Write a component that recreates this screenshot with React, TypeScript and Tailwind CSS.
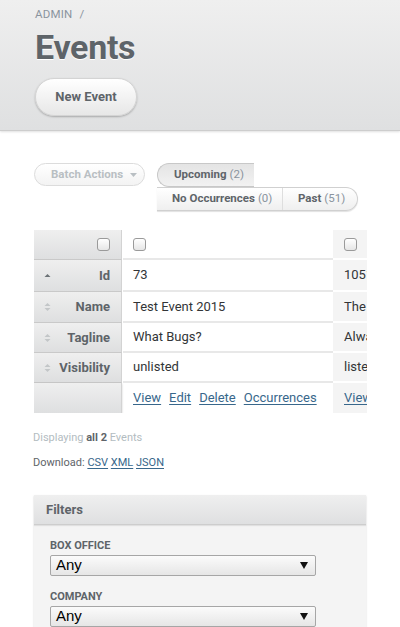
import React from "react";

const Checkbox = () => (
  <span className="inline-block w-[13px] h-[13px] rounded-[3px] border border-[#9a9a9a] bg-gradient-to-b from-[#ffffff] to-[#e6e6e6]" />
);

const SortIcon = ({ active }: { active?: boolean }) =>
  active ? (
    <svg width="7" height="8" viewBox="0 0 7 8" className="shrink-0">
      <path d="M0.5 5 L3.5 2 L6.5 5 Z" fill="#6c7276" />
    </svg>
  ) : (
    <svg width="7" height="10" viewBox="0 0 7 10" className="shrink-0">
      <path d="M0.5 4 L3.5 1 L6.5 4 Z" fill="#c3c6c8" />
      <path d="M0.5 6 L3.5 9 L6.5 6 Z" fill="#c3c6c8" />
    </svg>
  );

type Row = { label: string; sort?: "active" | "none"; h: string; a: React.ReactNode; b: React.ReactNode };

export default function App() {
  const link = "text-[#38678b] underline underline-offset-2";
  const rows: Row[] = [
    { label: "", h: "h-[30px]", a: <Checkbox />, b: <Checkbox /> },
    { label: "Id", sort: "active", h: "h-[32px]", a: "73", b: "1051" },
    { label: "Name", sort: "none", h: "h-[31px]", a: "Test Event 2015", b: "The Event" },
    { label: "Tagline", sort: "none", h: "h-[30px]", a: "What Bugs?", b: "Always" },
    { label: "Visibility", sort: "none", h: "h-[30px]", a: "unlisted", b: "listed" },
    {
      label: "",
      h: "h-[30px]",
      a: (
        <span className="flex gap-[8px]">
          <span className={link}>View</span>
          <span className={link}>Edit</span>
          <span className={link}>Delete</span>
          <span className={link}>Occurrences</span>
        </span>
      ),
      b: <span className={link}>View</span>,
    },
  ];

  return (
    <div className="w-[400px] min-h-[627px] bg-white font-['Roboto',sans-serif] text-[#323537] overflow-hidden">
      {/* Title bar */}
      <div className="h-[131px] bg-gradient-to-b from-[#efefef] to-[#dfe0e1] border-b border-[#cdcdcd] shadow-[0_1px_2px_rgba(0,0,0,0.12)] pl-[35px] pt-[7px]">
        <div className="text-[11.5px] text-[#8a949e] tracking-[0.2px] leading-[14px]">
          ADMIN <span className="ml-[4px]">/</span>
        </div>
        <h2 className="mt-[9px] text-[34px] font-bold text-[#5e6469] leading-[34px] tracking-[-0.3px] [text-shadow:0_1px_0_#fff]">
          Events
        </h2>
        <div className="mt-[14px] w-[102px] h-[38px] rounded-full bg-gradient-to-b from-[#ffffff] to-[#e7e7e7] border border-[#d4d4d4] shadow-[0_1px_2px_rgba(0,0,0,0.25)] flex items-center justify-center text-[13px] font-bold text-[#5e6469]">
          New Event
        </div>
      </div>

      {/* Table tools */}
      <div className="mt-[32px] pl-[34px] flex items-start">
        <div className="w-[111px] h-[23px] rounded-full border border-[#dcdcdc] bg-gradient-to-b from-[#ffffff] to-[#f3f3f3] flex items-center pl-[16px] text-[11.5px] font-bold text-[#b9bfc3]">
          Batch Actions
          <svg width="7" height="4" viewBox="0 0 7 4" className="ml-[7px]">
            <path d="M0 0 L7 0 L3.5 4 Z" fill="#b9bfc3" />
          </svg>
        </div>
        <div className="ml-[12px] flex flex-col">
          <div className="w-[97px] h-[24px] rounded-l-full border border-r-0 border-[#c8c8c8] bg-gradient-to-b from-[#e4e4e4] to-[#f2f2f2] flex items-center pl-[16px] text-[11.5px] text-[#5e6469]">
            <span className="font-bold">Upcoming</span>
            <span className="ml-[3px] text-[#8a949e]">(2)</span>
          </div>
          <div className="flex h-[24px] w-[201px] rounded-r-full border border-l-0 border-[#d0d0d0] bg-gradient-to-b from-[#ffffff] to-[#efefef] shadow-[0_1px_1px_rgba(0,0,0,0.12)] text-[11.5px] text-[#5e6469]">
            <div className="w-[126px] border-r border-[#dedede] flex items-center pl-[15px]">
              <span className="font-bold">No Occurrences</span>
              <span className="ml-[3px] text-[#8a949e]">(0)</span>
            </div>
            <div className="flex-1 flex items-center pl-[15px]">
              <span className="font-bold">Past</span>
              <span className="ml-[3px] text-[#8a949e]">(51)</span>
            </div>
          </div>
        </div>
      </div>

      {/* Table */}
      <div className="mt-[19px] ml-[34px] w-[333px] overflow-hidden">
        <div className="flex flex-col w-[420px]">
          {rows.map((r, i) => (
            <div key={i} className={`flex ${r.h}`}>
              <div
                className={`w-[88px] shrink-0 flex items-center justify-end pr-[11px] relative bg-gradient-to-b from-[#efefef] to-[#dedfe0] border-r border-[#d3d3d3] text-[13px] font-bold text-[#5e6469] ${
                  i < rows.length - 1 ? "border-b border-b-[#c9c9c9]" : "shadow-[0_1px_2px_rgba(0,0,0,0.2)]"
                }`}
              >
                {r.sort && (
                  <span className="absolute left-[10px] top-1/2 -translate-y-1/2 flex">
                    <SortIcon active={r.sort === "active"} />
                  </span>
                )}
                {r.label === "" && i === 0 ? <Checkbox /> : r.label}
              </div>
              <div
                className={`w-[210px] shrink-0 ml-[1px] flex items-center pl-[10px] text-[13px] bg-white ${
                  i < rows.length - 1 ? "border-b-2 border-[#e8e8e8]" : ""
                }`}
              >
                {r.a}
              </div>
              <div
                className={`flex-1 flex items-center pl-[11px] text-[13px] bg-[#f4f4f4] whitespace-nowrap ${
                  i < rows.length - 1 ? "border-b-2 border-[#ffffff]" : ""
                }`}
              >
                {r.b}
              </div>
            </div>
          ))}
        </div>
      </div>

      {/* Pagination info */}
      <div className="mt-[18px] pl-[33px] text-[11px] text-[#b3bcc1] leading-[13px]">
        Displaying <span className="font-bold text-[#5e6469]">all 2</span> Events
      </div>
      <div className="mt-[12px] pl-[33px] text-[11px] text-[#5e6469] leading-[13px]">
        Download: <span className={link}>CSV</span> <span className={link}>XML</span>{" "}
        <span className={link}>JSON</span>
      </div>

      {/* Filters */}
      <div className="mt-[26px] ml-[34px] w-[332px] bg-[#f4f4f4] shadow-[0_1px_2px_rgba(0,0,0,0.15)]">
        <div className="h-[30px] bg-gradient-to-b from-[#efefef] to-[#dfe0e1] border-b border-[#cdcdcd] shadow-[0_1px_1px_rgba(0,0,0,0.08)] flex items-center pl-[12px] text-[13px] font-bold text-[#5e6469]">
          Filters
        </div>
        <div className="pl-[16px] pt-[14px] pb-[4px]">
          {["BOX OFFICE", "COMPANY"].map((l, i) => (
            <div key={l} className={i ? "mt-[14px]" : ""}>
              <div className="text-[11px] font-bold text-[#5e6469] leading-[13px]">{l}</div>
              <div className="mt-[3px] w-[266px] h-[21px] border border-[#a6a6a6] rounded-[2px] bg-gradient-to-b from-[#fbfbfb] to-[#e6e6e6] flex items-center justify-between pl-[5px] pr-[7px] font-['Liberation_Sans',sans-serif] text-[15px] text-black">
                <span>Any</span>
                <svg width="8" height="7" viewBox="0 0 8 7">
                  <path d="M0 0 L8 0 L4 7 Z" fill="#111" />
                </svg>
              </div>
            </div>
          ))}
        </div>
      </div>
    </div>
  );
}
